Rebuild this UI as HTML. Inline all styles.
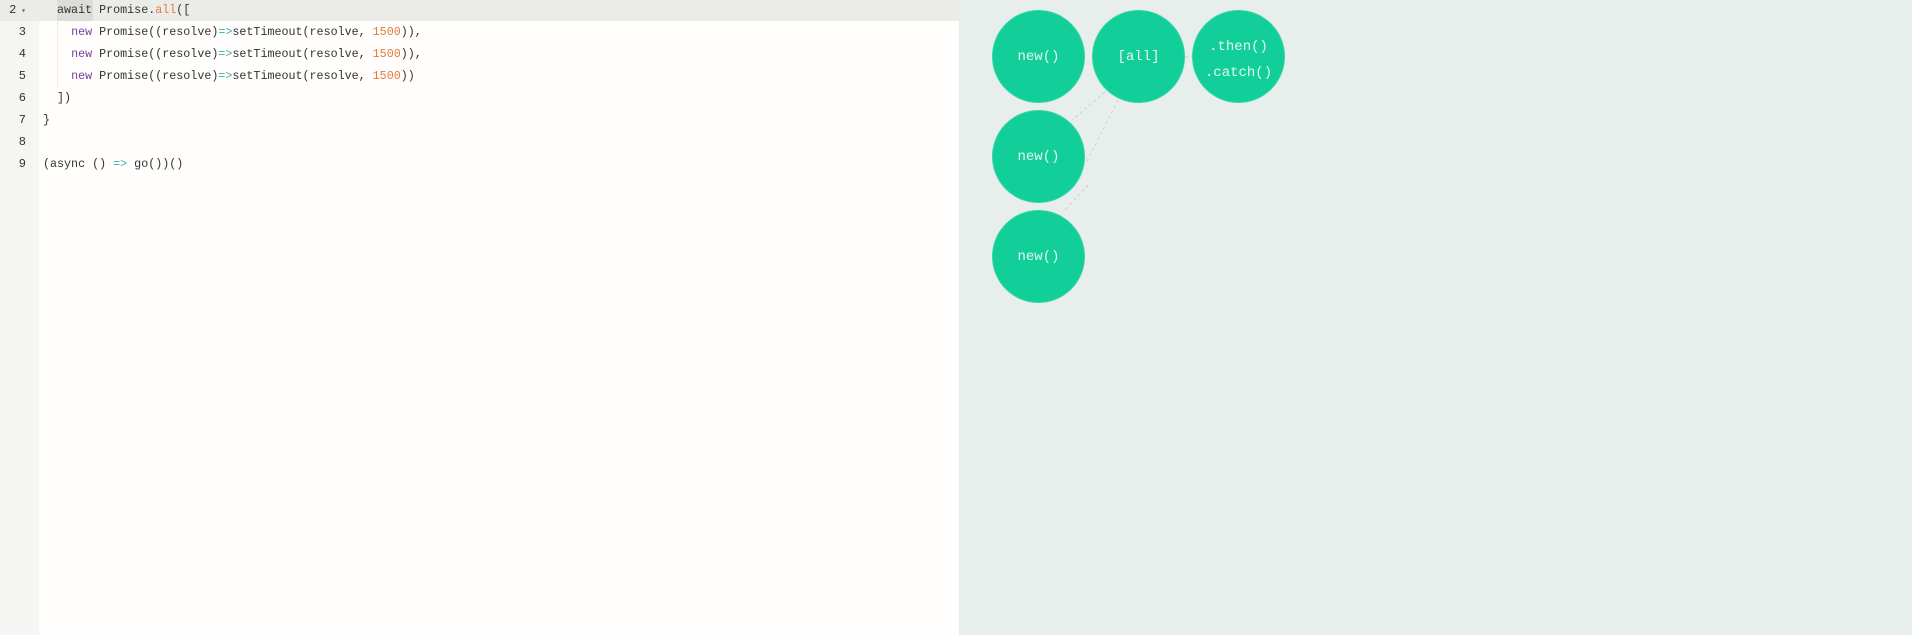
<!DOCTYPE html>
<html><head><style>
body{margin:0;width:1912px;height:635px;overflow:hidden;background:#e8eeeb;font-family:"Liberation Mono","DejaVu Sans Mono",monospace;position:relative}
#ed{position:absolute;left:0;top:0;width:959px;height:635px;background:#fffefc}
#gut{position:absolute;left:0;top:0;width:39px;height:635px;background:#f5f5f3}
.hl{position:absolute;left:0;top:0;width:959px;height:21px;background:#ebebe8}
.ln{position:absolute;left:0;width:26px;text-align:right;font-size:12px;color:#333;line-height:22px}
.code{position:absolute;left:43px;font-size:11.7px;line-height:22px;color:#333;white-space:pre}
.kw{color:#7a3e9d}.num{color:#e07b39}.op{color:#3cb0b0}
.c{position:absolute;width:91px;height:91px;border-radius:50%;background:#12ce98;color:#e3f7f0;font-size:14px;display:flex;align-items:center;justify-content:center;text-align:center;line-height:24px;box-shadow:0 0 0 1px #2fd6a6}
</style></head><body>
<div id="ed"></div><div id="gut"></div>
<div class="hl"></div>
<div style="position:absolute;left:57px;top:0;width:36px;height:21px;background:#dcdcd8"></div>
<div class="ln" style="top:-1px">2<span style="font-size:8px;color:#666"> ▾</span></div>
<div class="ln" style="top:21px">3</div><div class="ln" style="top:43px">4</div><div class="ln" style="top:65px">5</div>
<div class="ln" style="top:87px">6</div><div class="ln" style="top:109px">7</div><div class="ln" style="top:131px">8</div><div class="ln" style="top:153px">9</div>
<div style="position:absolute;left:57px;top:22px;height:66px;border-left:1px dotted #ddd"></div>
<div class="code" style="top:-1px">  await Promise.<span class="num">all</span>([</div>
<div class="code" style="top:21px">    <span class="kw">new</span> Promise((resolve)<span class="op">=&gt;</span>setTimeout(resolve, <span class="num">1500</span>)),</div>
<div class="code" style="top:43px">    <span class="kw">new</span> Promise((resolve)<span class="op">=&gt;</span>setTimeout(resolve, <span class="num">1500</span>)),</div>
<div class="code" style="top:65px">    <span class="kw">new</span> Promise((resolve)<span class="op">=&gt;</span>setTimeout(resolve, <span class="num">1500</span>))</div>
<div class="code" style="top:87px">  ])</div>
<div class="code" style="top:109px">}</div>
<div class="code" style="top:153px">(async () <span class="op">=&gt;</span> go())()</div>
<svg style="position:absolute;left:0;top:0" width="1912" height="635">
<g stroke="#c8d2d0" stroke-dasharray="3,3" stroke-width="1" fill="none">
<line x1="1105" y1="92" x2="1072" y2="120"/>
<line x1="1118" y1="100" x2="1085" y2="165"/>
<line x1="1088" y1="185" x2="1065" y2="210"/>
<line x1="1185" y1="57" x2="1193" y2="57"/>
</g></svg>
<div class="c" style="left:993px;top:11px">new()</div>
<div class="c" style="left:1093px;top:11px">[all]</div>
<div class="c" style="left:1193px;top:11px;display:block;padding-top:23px;line-height:26px;box-sizing:border-box">.then()<br>.catch()</div>
<div class="c" style="left:993px;top:111px">new()</div>
<div class="c" style="left:993px;top:211px">new()</div>
</body></html>
